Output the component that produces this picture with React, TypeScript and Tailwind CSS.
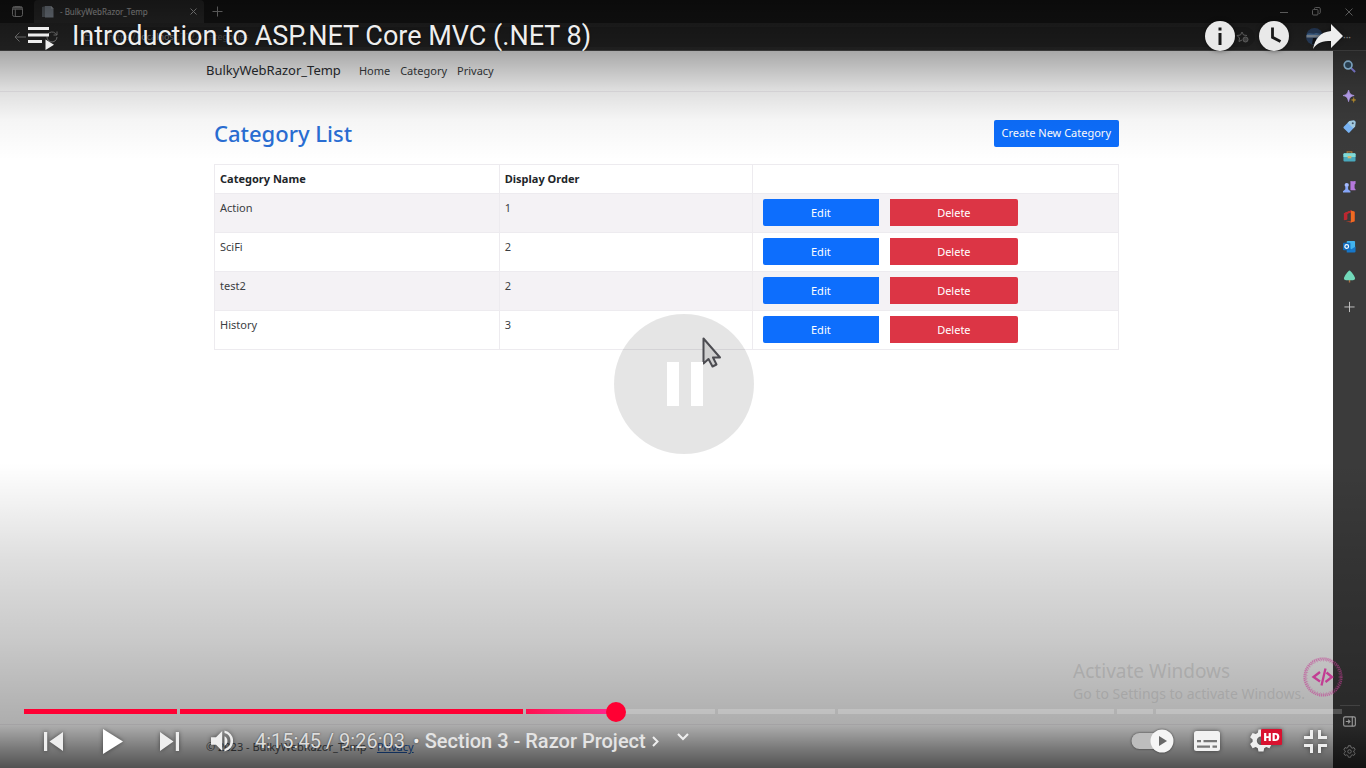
import { useState, type ReactNode } from "react";

const categories = [
  { name: "Action", order: 1 },
  { name: "SciFi", order: 2 },
  { name: "test2", order: 2 },
  { name: "History", order: 3 },
];

const chapters = [
  { size: 153, played: 100, fill: "bg-[#ff0033]" },
  { size: 343, played: 100, fill: "bg-[#ff0033]" },
  { size: 190, played: 47, fill: "bg-gradient-to-r from-[#ff0f4f] to-[#ff2791]" },
  { size: 117, played: 0, fill: "" },
  { size: 276, played: 0, fill: "" },
  { size: 36, played: 0, fill: "" },
  { size: 186, played: 0, fill: "" },
];

function TabStrip() {
  return (
    <div className="flex h-[23px] shrink-0 items-stretch bg-[#1b1b1b] text-[#c0c0c0]">
      <button aria-label="Tab actions" className="flex w-[34px] items-center justify-center">
        <svg width="11" height="11" viewBox="0 0 11 11" fill="none" stroke="currentColor">
          <rect x="0.5" y="0.5" width="10" height="10" rx="2" />
          <path d="M0.5 3.2h10M3.3 3.2v7" />
          <path d="M1 1.8h9" strokeWidth="1.5" />
        </svg>
      </button>
      <div className="flex w-[170px] items-center rounded-t bg-[#353535] pl-[7px] pr-[3px]">
        <svg width="13" height="12" viewBox="0 0 13 12" className="mr-1.5">
          <path d="M1 1l4-1v11H1z" fill="#7a828a" />
          <path d="M4 0h6l2.5 2.5V11.500H4z" fill="#a9b4c2" />
          <path d="M10 0v2.500h2.500z" fill="#dde4ea" />
        </svg>
        <span className="flex-1 whitespace-nowrap text-[8px] text-[#e4e4e4]">- BulkyWebRazor_Temp</span>
        <button aria-label="Close tab" className="flex size-4 items-center justify-center">
          <svg width="7" height="7" viewBox="0 0 7 7" stroke="#e0e0e0">
            <path d="M0.5 0.5l6 6M6.500 0.5l-6 6" />
          </svg>
        </button>
      </div>
      <button aria-label="New tab" className="flex w-[26px] items-center justify-center">
        <svg width="11" height="11" viewBox="0 0 11 11" stroke="currentColor">
          <path d="M5.500 0.500v10M0.500 5.500h10" />
        </svg>
      </button>
      <div className="ml-auto flex">
        <button aria-label="Minimize" className="flex w-8 items-center justify-center">
          <svg width="8" height="8" viewBox="0 0 8 8" stroke="currentColor"><path d="M0 4.500h8" /></svg>
        </button>
        <button aria-label="Restore" className="flex w-8 items-center justify-center">
          <svg width="9" height="9" viewBox="0 0 9 9" fill="none" stroke="currentColor">
            <rect x="0.500" y="2.500" width="5.500" height="5.500" rx="1" />
            <path d="M2.500 2V1.500a1 1 0 0 1 1-1H7a1.300 1.300 0 0 1 1.300 1.300V5.500a1 1 0 0 1-1 1H7" />
          </svg>
        </button>
        <button aria-label="Close window" className="flex w-[34px] items-center justify-center">
          <svg width="8" height="8" viewBox="0 0 8 8" stroke="currentColor"><path d="M0.500 0.500l7 7M7.500 0.500l-7 7" /></svg>
        </button>
      </div>
    </div>
  );
}

function AddressBar() {
  return (
    <div className="flex h-7 shrink-0 items-center border-b border-[#555] bg-[#303030] text-[#aaa]">
      <button aria-label="Back" className="flex w-10 items-center justify-center">
        <svg width="12" height="10" viewBox="0 0 12 10" fill="none" stroke="currentColor">
          <path d="M12 5H1M5.500 0.500L1 5l4.500 4.500" />
        </svg>
      </button>
      <button aria-label="Refresh" className="flex w-6 items-center justify-center">
        <svg width="12" height="12" viewBox="0 0 12 12" fill="none" stroke="currentColor">
          <path d="M11 6a5 5 0 1 1-1.500-3.600L11 4M11 0.500V4H7.500" />
        </svg>
      </button>
      <div className="ml-2 flex h-5 flex-1 items-center justify-between rounded-full bg-[#292929] pl-3 pr-1.5">
        <div className="flex items-center">
          <svg width="8" height="9" viewBox="0 0 8 9" fill="none" stroke="#777">
            <rect x="0.500" y="3.500" width="7" height="5" rx="1" />
            <path d="M2 3.500V2a2 2 0 0 1 4 0v1.500" />
          </svg>
          <span className="ml-4 text-[9px] text-[#666]">
            https://<span className="text-[#aaa]">localhost</span>:7022/Categories
          </span>
        </div>
        <svg width="13" height="12" viewBox="0 0 13 12" fill="none" stroke="#999">
          <path d="M6 9L3 10.500 3.500 7 1 4.500l3.500-.5L6 1l1.500 3 3.500.5" />
          <circle cx="9.500" cy="8.500" r="2.500" fill="#666" />
        </svg>
      </div>
      <div className="flex w-[111px] items-center justify-end gap-5 pr-[15px]">
        <svg width="17" height="17" viewBox="0 0 17 17">
          <circle cx="8.500" cy="8.500" r="8.500" fill="#3a5a88" />
          <path d="M0.500 7h16v2.500h-16z" fill="#c0d2e6" />
          <path d="M1 6c3-2 6 1 9-1l6 1v1H1z" fill="#649ad8" />
          <path d="M7 10h3l1 6H6z" fill="#191c24" />
        </svg>
        <span className="text-[10px] leading-none text-[#ddd]">···</span>
      </div>
    </div>
  );
}

function SideItem({ label, children }: { label: string; children: ReactNode }) {
  return (
    <button aria-label={label} className="flex h-[30px] w-full items-center justify-center">
      <svg width="13" height="13" viewBox="0 0 14 14" fill="none">{children}</svg>
    </button>
  );
}

function Sidebar() {
  return (
    <aside className="flex w-[33px] shrink-0 flex-col items-center bg-[#3b3b3b]">
      <SideItem label="Search">
        <path d="M8.500 8.500l4.500 4.500" stroke="#8f8cf0" strokeWidth="2.200" />
        <circle cx="5.500" cy="5.500" r="4.200" stroke="#a5daff" strokeWidth="1.800" fill="#35536a" />
      </SideItem>
      <SideItem label="Discover">
        <path d="M6 0c1 4 2.200 5.200 6 6-3.800.8-5 2-6 6.500C5 8 3.800 6.800 0 6c3.800-.8 5-2 6-6z" fill="#c4aaff" stroke="#c4aaff" strokeWidth="0.800" />
        <path d="M11.500 8c.4 1.900.8 2.300 2.500 2.700-1.700.4-2.100.9-2.500 2.800-.4-1.900-.8-2.400-2.500-2.800 1.700-.4 2.100-.8 2.500-2.700z" fill="#c09530" stroke="#c09530" strokeWidth="0.500" />
      </SideItem>
      <SideItem label="Shopping">
        <path d="M7 1l5-.5 1.500 1.500-.5 5-6 6.500c-.5.5-1 .5-1.500 0L.8 8.800c-.5-.5-.5-1 0-1.500z" fill="#7cb8fa" />
        <path d="M7 1l5-.5 1.500 1.500-.5 5-2 2L5 3z" fill="#a7d0e6" />
        <circle cx="10.500" cy="3.500" r="1.100" fill="#43566a" />
      </SideItem>
      <SideItem label="Tools">
        <path d="M4.500 4V2h5v2" stroke="#a9783a" strokeWidth="1.300" />
        <rect x="0.500" y="3.500" width="13" height="9" rx="1.200" fill="#49a9bd" />
        <path d="M.5 4.700c0-.7.500-1.200 1.200-1.200h10.600c.7 0 1.200.5 1.200 1.200V7.500H.5z" fill="#83dcd7" />
        <path d="M5 6.500h4v2.500H5z" fill="#d6b66b" />
      </SideItem>
      <SideItem label="Games">
        <path d="M8 1h1.500v1H10V1h1.500v1h.5V1h1.500v3l-1 .8v4l1 1.200v1H8z" fill="#b678dc" />
        <circle cx="4" cy="5.500" r="2.300" fill="#a5bbff" />
        <path d="M2.500 7h3v3L8 12v1.500H0V12l2.500-2z" fill="#86a6f8" />
      </SideItem>
      <SideItem label="Microsoft 365">
        <path d="M8.500.5L12.500 2v10l-4 1.500L3 12l5.500.3V2.500L4.500 4v6L1 11V3.500z" fill="#e13f23" />
        <path d="M8.500.5L12.500 2v10l-4 1.500z" fill="#ef6b22" />
        <path d="M8.500.5L1 3.500V11l3.500-1V4l4-1.500z" fill="#bd2631" />
      </SideItem>
      <SideItem label="Outlook">
        <rect x="4" y="1" width="9" height="10" rx="1" fill="#42b3ed" />
        <path d="M4 7l5 3 4.500-3v5.500c0 .5-.5 1-1 1H4z" fill="#1677c9" />
        <rect x="0" y="3" width="8" height="8" rx="1" fill="#126cbd" />
        <circle cx="4" cy="7" r="2" stroke="#fff" strokeWidth="1.300" />
      </SideItem>
      <SideItem label="Drop">
        <path d="M6.300 10h1.500v3.500H6.300z" fill="#ad7041" />
        <path d="M7 .5c1.200 0 6 6.500 6 8.500 0 1.300-1 2-2.300 2H3.300C2 11 1 10.300 1 9 1 7 5.800.5 7 .5z" fill="#72d9ba" />
      </SideItem>
      <SideItem label="Customize">
        <path d="M7 2v11M1.500 7.500h11" stroke="#c8c8c8" />
      </SideItem>
      <div className="mt-auto flex w-full flex-col items-center pb-0.5">
        <div className="h-px w-5 bg-[#5e5e5e]" />
        <SideItem label="Hide sidebar">
          <rect x="0.700" y="2" width="12.600" height="10" rx="1.500" stroke="#e0e0e0" strokeWidth="1.200" />
          <path d="M10 2v10M3 7h4.500M5.500 5l2 2-2 2" stroke="#e0e0e0" strokeWidth="1.200" />
        </SideItem>
        <SideItem label="Settings">
          <path d="M5.800.8h2.400l.5 1.900 1.200.7 1.900-.6 1.300 2.100-1.500 1.400v1.400l1.500 1.400-1.300 2.100-1.900-.6-1.200.7-.5 1.900H5.800l-.5-1.900-1.200-.7-1.900.6L.9 9.100l1.500-1.400V6.300L.9 4.900l1.300-2.100 1.900.6 1.200-.7z" stroke="#f0f0f0" />
          <circle cx="7" cy="7" r="1.900" stroke="#f0f0f0" />
        </SideItem>
      </div>
    </aside>
  );
}

function WebPage() {
  return (
    <div className="flex min-w-0 flex-1 flex-col bg-white text-[#212529]">
      <header className="border-b border-[#f1eff2]">
        <nav className="mx-auto flex h-10 max-w-[921px] items-center text-[11px] text-[#3a3d42]">
          <a href="#" className="mr-[18px] text-[13px] text-[#2b2e33]">BulkyWebRazor_Temp</a>
          <div className="flex gap-2.5">
            <a href="#">Home</a>
            <a href="#">Category</a>
            <a href="#">Privacy</a>
          </div>
        </nav>
      </header>
      <main className="mx-auto w-full max-w-[921px] flex-1 px-2 pt-7">
        <div className="mb-[17px] flex h-[27px] items-center justify-between">
          <h1 className="text-[22px] font-medium text-[#2a6fd6]">Category List</h1>
          <a href="#" className="flex h-[27px] items-center rounded-[2px] bg-[#0d6efd] px-2 text-[11px] text-white">
            Create New Category
          </a>
        </div>
        <table className="w-full table-fixed border-collapse text-left text-[11px] leading-4 text-[#3b3e43]">
          <thead>
            <tr className="h-[29px] text-[#212529]">
              <th className="w-[31.5%] border border-[#edebef] px-[5px] font-bold">Category Name</th>
              <th className="w-[28%] border border-[#edebef] px-[5px] font-bold">Display Order</th>
              <th className="border border-[#edebef]" aria-label="Actions" />
            </tr>
          </thead>
          <tbody>
            {categories.map((c) => (
              <tr key={c.name} className="h-[39px] odd:bg-[#f4f2f5]">
                <td className="border border-[#edebef] px-[5px] pt-1.5 align-top">{c.name}</td>
                <td className="border border-[#edebef] px-[5px] pt-1.5 align-top">{c.order}</td>
                <td className="border border-[#edebef] pb-0.5 pl-[10px]">
                  <div className="flex gap-[11px] text-center leading-[27px] text-white">
                    <a href="#" className="w-[116px] rounded-l-[2px] bg-[#0d6efd]">Edit</a>
                    <a href="#" className="w-32 rounded-r-[2px] bg-[#dc3545]">Delete</a>
                  </div>
                </td>
              </tr>
            ))}
          </tbody>
        </table>
      </main>
      <footer className="border-t border-[#f1eff2]">
        <div className="mx-auto flex h-[43px] max-w-[921px] items-center gap-1 pt-0.5 text-[11px] text-[#5a5d62]">
          © 2023 - BulkyWebRazor_Temp - <a href="#" className="text-[#2368cc] underline">Privacy</a>
        </div>
      </footer>
    </div>
  );
}

function PlayerButton({ label, className, children }: { label: string; className: string; children: ReactNode }) {
  return (
    <button aria-label={label} className={`flex h-full items-center justify-center drop-shadow-[0_0_2px_rgba(0,0,0,0.5)] ${className}`}>
      {children}
    </button>
  );
}

function TitleBar() {
  return (
    <div className="absolute inset-x-0 top-0 flex h-[72px] items-center pl-7 pr-[11px] text-[#eee]">
      <button aria-label="Playlist" className="mr-[18px] pt-1">
        <svg width="26" height="24" viewBox="0 0 26 24" fill="currentColor">
          <path d="M0 1h21v3H0zM0 7.500h21v3H0zM0 14h14v3H0zM17.500 13.500v10.500l8.500-5.300z" />
        </svg>
      </button>
      <h2 className="flex-1 whitespace-nowrap font-['Roboto',sans-serif] text-[27px] [text-shadow:0_0_2px_rgba(0,0,0,0.6)]">
        Introduction to ASP.NET Core MVC (.NET 8)
      </h2>
      <PlayerButton label="Info" className="w-[54px]">
        <svg width="30" height="30" viewBox="0 0 30 30">
          <circle cx="15" cy="15" r="15" fill="#e9e9e9" />
          <path d="M13.500 6.500h3v3h-3zM13.500 12h3v12h-3z" fill="#191919" />
        </svg>
      </PlayerButton>
      <PlayerButton label="Watch later" className="w-[54px]">
        <svg width="30" height="30" viewBox="0 0 30 30">
          <circle cx="15" cy="15" r="15" fill="#e9e9e9" />
          <path d="M13.500 6.500v9.800l8 4.200" fill="none" stroke="#191919" strokeWidth="2.800" />
        </svg>
      </PlayerButton>
      <PlayerButton label="Share" className="w-[54px]">
        <svg width="30" height="26" viewBox="0 0 30 26">
          <path d="M18 1l12 12-12 12v-7c-8 0-14 1.500-18 8C2 16 7 9 18 8z" fill="#eee" />
        </svg>
      </PlayerButton>
    </div>
  );
}

function ProgressBar() {
  const [time, setTime] = useState(449);
  return (
    <div className="relative mx-6 flex h-[5px] gap-[3px]">
      {chapters.map((c, i) => (
        <div key={i} className="h-full min-w-0 basis-0 bg-white/20" style={{ flexGrow: c.size }}>
          <div className={`h-full ${c.fill}`} style={{ width: `${c.played}%` }} />
        </div>
      ))}
      <div
        className="absolute top-1/2 size-5 -translate-x-1/2 -translate-y-1/2 rounded-full bg-[#ff0033]"
        style={{ left: `${time / 10}%` }}
      />
      <input
        type="range"
        aria-label="Seek"
        min={0}
        max={1000}
        value={time}
        onChange={(e) => setTime(Number(e.target.value))}
        className="absolute inset-0 w-full opacity-0"
      />
    </div>
  );
}

function Controls() {
  return (
    <div className="flex h-[54px] items-center px-6 font-['Roboto',sans-serif] text-[20px] text-[#eee]">
      <PlayerButton label="Previous" className="w-[58px]">
        <svg width="19" height="19" viewBox="0 0 19 19" fill="currentColor"><path d="M0 0h3.200v19H0zM19 0v19L5.500 9.500z" /></svg>
      </PlayerButton>
      <PlayerButton label="Play" className="w-[58px] pl-[3px]">
        <svg width="20" height="25" viewBox="0 0 20 25" fill="#fff"><path d="M0 0v25l20-12.500z" /></svg>
      </PlayerButton>
      <PlayerButton label="Next" className="w-[58px]">
        <svg width="19" height="19" viewBox="0 0 19 19" fill="currentColor"><path d="M15.800 0H19v19h-3.200zM0 0v19l13.500-9.500z" /></svg>
      </PlayerButton>
      <PlayerButton label="Mute" className="w-12">
        <svg width="22" height="22" viewBox="0 0 22 22" fill="currentColor">
          <path d="M0 7.200v7.600h5l6.200 6.200V1L5 7.200z" />
          <path d="M13.500 6.200v9.600a5.400 5.400 0 0 0 0-9.600z" />
          <path d="M13.500 0.500v2.600a8.200 8.200 0 0 1 0 15.800v2.600a10.700 10.700 0 0 0 0-21z" />
        </svg>
      </PlayerButton>
      <div className="ml-[9px] flex items-center gap-2 whitespace-nowrap [text-shadow:0_0_2px_rgba(0,0,0,0.5)]">
        <span className="text-[#ddd]">4:15:45 / 9:26:03</span>
        <span className="-mr-[3px]">•</span>
        <button className="flex items-center gap-1.5 font-medium text-[#e4e4e4]">
          Section 3 - Razor Project
          <svg width="7" height="11" viewBox="0 0 7 11" fill="none" stroke="#eee" strokeWidth="2"><path d="M1 1l4.500 4.500L1 10" /></svg>
        </button>
        <button aria-label="More" className="ml-2.5 pb-2">
          <svg width="12" height="8" viewBox="0 0 12 8" fill="none" stroke="#eee" strokeWidth="2.200"><path d="M1 1l5 5 5-5" /></svg>
        </button>
      </div>
      <div className="ml-auto flex h-full">
        <label className="relative flex w-[54px] items-center justify-center drop-shadow-[0_0_1px_rgba(0,0,0,0.6)]">
          <input type="checkbox" aria-label="Autoplay" defaultChecked className="absolute size-6 opacity-0" />
          <svg width="44" height="24" viewBox="0 0 44 24">
            <rect x="0.500" y="4" width="38" height="16" rx="8" fill="#bdbdbd" />
            <circle cx="31" cy="12" r="11.500" fill="#f5f5f5" />
            <path d="M28 7v10l8-5z" fill="#686868" />
          </svg>
        </label>
        <PlayerButton label="Subtitles" className="w-[54px]">
          <svg width="26" height="20" viewBox="0 0 26 20">
            <rect width="26" height="20" rx="2.500" fill="#f2f2f2" />
            <path d="M3 9h4v2.300H3zM9.500 9H23v2.300H9.500zM3 14.500h13v2.300H3zM18.500 14.500H23v2.300h-4.500z" fill="#777" />
          </svg>
        </PlayerButton>
        <PlayerButton label="Settings" className="relative w-[54px]">
          <svg width="24" height="24" viewBox="0 0 24 24" fill="#eee">
            <path d="M9.500 0.500h5l.7 3.300 2 1.200 3.200-1.100 2.500 4.300-2.500 2.200v2.300l2.500 2.200-2.500 4.300-3.200-1.100-2 1.200-.7 3.200h-5l-.7-3.200-2-1.200-3.200 1.100-2.500-4.300 2.500-2.200v-2.300L1.100 8.200l2.500-4.300L6.800 5l2-1.200zM12 7.500a4.200 4.200 0 1 0 0 8.400 4.200 4.200 0 0 0 0-8.400z" fillRule="evenodd" />
          </svg>
          <span className="absolute left-[27px] top-[15px] h-4 w-[21px] rounded-[1px] bg-[#d9112f] text-center font-['Open_Sans',sans-serif] text-[11px] font-extrabold leading-4 text-white">
            HD
          </span>
        </PlayerButton>
        <PlayerButton label="Exit full screen" className="w-[54px]">
          <svg width="23" height="23" viewBox="0 0 23 23" fill="none" stroke="#eee" strokeWidth="3">
            <path d="M7.500 0v7.500H0M15.500 0v7.500H23M7.500 23v-7.500H0M15.500 23v-7.500H23" />
          </svg>
        </PlayerButton>
      </div>
    </div>
  );
}

function PauseIndicator() {
  return (
    <>
      <svg width="20" height="32" viewBox="0 0 20 32" className="absolute left-[calc(50%+19px)] top-[calc(50%-47px)]">
        <path d="M1.500 1.500v25l5-4.500 4 7.500 4-2-3.500-7h7z" fill="#e8e8e8" stroke="#55555b" strokeWidth="2" strokeLinejoin="round" />
      </svg>
      <div className="absolute left-[calc(50%+1px)] top-1/2 flex size-[140px] -translate-x-1/2 -translate-y-1/2 items-center justify-center gap-3 rounded-full bg-black/10 pl-0.5">
        <div className="h-11 w-3 bg-white" />
        <div className="h-11 w-3 bg-white" />
      </div>
    </>
  );
}

function Watermark() {
  return (
    <div className="absolute bottom-[63px] right-[23px] flex items-start text-[#8c8c8c]/40">
      <div className="pt-0.5">
        <p className="text-[19px] leading-6">Activate Windows</p>
        <p className="whitespace-nowrap text-[14px] leading-[22px]">Go to Settings to activate Windows.</p>
      </div>
      <svg width="40" height="40" viewBox="0 0 40 40" fill="none" stroke="#c23d93" className="-ml-0.5">
        <circle cx="20" cy="20" r="18.700" strokeWidth="1.800" strokeDasharray="1.300 .7" opacity="0.600" />
        <circle cx="20" cy="20" r="17.200" strokeWidth="1.400" strokeDasharray="1.500 .8" opacity="0.500" />
        <circle cx="20" cy="20" r="16" strokeWidth="0.800" strokeDasharray="1 2" opacity="0.400" />
        <path d="M17 15l-6.500 5 6.500 4.500M23.500 15.500L29 20l-6.500 5M22.500 11.500l-4 17" strokeWidth="2.300" />
      </svg>
    </div>
  );
}

export default function App() {
  return (
    <div className="relative flex h-screen flex-col overflow-hidden font-['Noto_Sans',sans-serif]">
      <TabStrip />
      <AddressBar />
      <div className="flex min-h-0 flex-1">
        <WebPage />
        <Sidebar />
      </div>
      <div className="pointer-events-none absolute inset-x-0 top-0 h-40 bg-[linear-gradient(to_bottom,rgba(0,0,0,0.6)_0,rgba(0,0,0,0.34)_51px,rgba(0,0,0,0.13)_90px,rgba(0,0,0,0.04)_120px,transparent)]" />
      <div className="pointer-events-none absolute inset-x-0 bottom-0 h-[305px] bg-[linear-gradient(to_top,rgba(0,0,0,0.68)_0,rgba(0,0,0,0.52)_20px,rgba(0,0,0,0.32)_43px,rgba(0,0,0,0.29)_68px,rgba(0,0,0,0.21)_128px,rgba(0,0,0,0.13)_208px,rgba(0,0,0,0.06)_260px,transparent)]" />
      <Watermark />
      <PauseIndicator />
      <TitleBar />
      <div className="absolute inset-x-0 bottom-0">
        <ProgressBar />
        <Controls />
      </div>
    </div>
  );
}
